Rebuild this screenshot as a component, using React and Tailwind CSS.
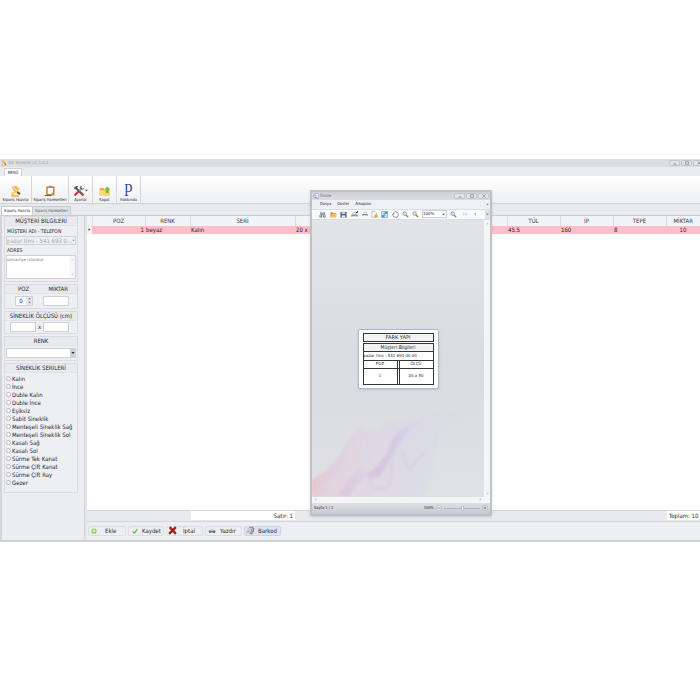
import React, { useState } from "react";

const series = [
  "Kalın",
  "İnce",
  "Duble Kalın",
  "Duble İnce",
  "Eşiksiz",
  "Sabit Sineklik",
  "Menteşeli Sineklik Sağ",
  "Menteşeli Sineklik Sol",
  "Kasalı Sağ",
  "Kasalı Sol",
  "Sürme Tek Kanat",
  "Sürme Çift Kanat",
  "Sürme Çift Ray",
  "Gezer",
];

function Svg({ className, children }) {
  return (
    <svg viewBox="0 0 16 16" fill="none" className={className} aria-hidden="true">
      {children}
    </svg>
  );
}

function OrderIcon({ className }) {
  return (
    <Svg className={className}>
      <path d="M3 3l5-2 5 4-4 4z" fill="#f3c04c" />
      <path d="M2 3l2-2 6 7-2 3z" fill="#f0913a" />
      <path d="M3 2l8 8" stroke="#fde6a4" strokeWidth="1.5" />
      <path d="M1 11l5-3 8 4-3 3H2z" fill="#f7cf6c" />
      <path d="M4 11l5-1 3 2-4 2z" fill="#fff3cf" />
      <path d="M10 8l4 3-1 2-4-2z" fill="#6a4a34" />
      <path d="M2 15h10" stroke="#d99a3a" />
    </Svg>
  );
}

function ClipboardIcon({ className }) {
  return (
    <Svg className={className}>
      <path d="M3 2h11v12H3z" fill="#c98732" />
      <path d="M5 4h7v6l-2 2H5z" fill="#fffdf6" />
      <path d="M12 10l-2 2v-2z" fill="#d8c39c" />
      <path d="M6 1h5v2H6z" fill="#8d96a3" />
      <path d="M1 14h9" stroke="#6b6660" strokeWidth="1.5" />
    </Svg>
  );
}

function ToolsIcon({ className }) {
  return (
    <Svg className={className}>
      <path d="M3 3l10 10" stroke="#50555d" strokeWidth="2.5" />
      <path d="M1 4l4-3 2 1-4 4z" fill="#50555d" />
      <path d="M12 4L7 9" stroke="#7d858e" strokeWidth="2" />
      <path d="M12 1l-1 3 2 1 2-2c0 3-2 4-4 3L9 4c0-2 1-3 3-3z" fill="#6c737c" />
      <path d="M8 8l-6 6" stroke="#d4392f" strokeWidth="3" />
      <path d="M11 11l3 3" stroke="#d4392f" strokeWidth="3" />
    </Svg>
  );
}

function FolderIcon({ className }) {
  return (
    <Svg className={className}>
      <path d="M1 4h5l1 2h7v8H1z" fill="#e8ab3c" />
      <path d="M1 7h14l-1 7H1z" fill="#fbd676" />
      <path d="M11 2l4 4h-2v5H9V6H7z" fill="#7bbd42" />
    </Svg>
  );
}

function OpenIcon({ className }) {
  return (
    <Svg className={className}>
      <path d="M1 3h5l2 2h6v9H1z" fill="#d9902e" />
      <path d="M4 7h12l-3 7H1z" fill="#f6bd5c" />
    </Svg>
  );
}

function BinocularsIcon({ className }) {
  return (
    <Svg className={className}>
      <path d="M4 2v4l-2 5v3h4V7h4v7h4v-3l-2-5V2" stroke="#65707f" strokeWidth="2" />
      <path d="M6 5h4" stroke="#65707f" strokeWidth="2" />
    </Svg>
  );
}

function SaveIcon({ className }) {
  return (
    <Svg className={className}>
      <path d="M1 2h14v13H1z" fill="#4b607f" />
      <path d="M4 2h8v5H4z" fill="#c3d2e6" />
      <path d="M4 10h8v5H4z" fill="#e9edf3" />
    </Svg>
  );
}

function PrinterIcon({ className, quick }) {
  return (
    <Svg className={className}>
      <path d="M4 7l2-4h7l-1 4" fill="#fff" stroke="#66788c" />
      <path d="M1 8h14v5H1z" fill="#72849a" />
      <path d="M3 11h10v3H3z" fill="#d9e5f1" />
      {quick && <path d="M11 5l4-4M15 1v3" stroke="#2c3f59" strokeWidth="2" />}
    </Svg>
  );
}

function PageSetupIcon({ className }) {
  return (
    <Svg className={className}>
      <path d="M2 1h7l3 3v10H2z" fill="#fff" stroke="#547fac" />
      <path d="M8 8h7v7H8z" fill="#e9a13d" />
    </Svg>
  );
}

function PreviewIcon({ className }) {
  return (
    <Svg className={className}>
      <path d="M5 1h9v13H4z" fill="#f4f8fd" stroke="#6d8cb4" />
      <circle cx="5" cy="9" r="3.5" fill="#d3e4f6" stroke="#4f729f" />
      <path d="M8 11l4 4" stroke="#4f729f" strokeWidth="2" />
    </Svg>
  );
}

function ScaleIcon({ className }) {
  return (
    <Svg className={className}>
      <path d="M1 1h14v14H1z" fill="#d7e6f4" stroke="#4c7fb3" />
      <path d="M8 1h7v6H8zM2 9h6v6H2z" fill="#5a93c5" />
      <path d="M4 4l8 8" stroke="#24507e" />
    </Svg>
  );
}

function HandIcon({ className }) {
  return (
    <Svg className={className}>
      <path
        d="M5 14l-4-6 2-1 1 1V4l2-2 2-1 2 1 2 1 2 3v4l-2 4z"
        fill="#fff"
        stroke="#5e6876"
        strokeWidth="1.6"
      />
    </Svg>
  );
}

function MagnifierIcon({ className }) {
  return (
    <Svg className={className}>
      <circle cx="6" cy="6" r="4" fill="#dcebf8" stroke="#66788c" strokeWidth="1.5" />
      <path d="M9 9l5 5" stroke="#b07838" strokeWidth="3" />
    </Svg>
  );
}

function AddIcon({ className }) {
  return (
    <Svg className={className}>
      <circle cx="8" cy="8" r="7" fill="#8bcb2c" />
      <path d="M8 4v8M4 8h8" stroke="#fff" strokeWidth="3" />
    </Svg>
  );
}

function CheckIcon({ className }) {
  return (
    <Svg className={className}>
      <path d="M2 9l4 5 8-11" stroke="#5cb52c" strokeWidth="3" />
    </Svg>
  );
}

function CancelIcon({ className }) {
  return (
    <Svg className={className}>
      <path d="M3 2l11 12M14 2L2 14" stroke="#ad1a17" strokeWidth="4" />
    </Svg>
  );
}

function PrintIcon({ className }) {
  return (
    <Svg className={className}>
      <path d="M1 8l4-2h7l3 2-1 4H3z" fill="#69717a" />
      <path d="M5 4h6l1 4H4z" fill="#c9ced4" />
      <path d="M5 10h5v2H5z" fill="#9ed05b" />
    </Svg>
  );
}

function BarcodeIcon({ className }) {
  return (
    <Svg className={className}>
      <path d="M5 2l6-1 4 3-1 6-4 5-4-1 3-6z" fill="#868c94" />
      <path d="M2 4l9-1-2 5-6 1z" fill="#c6cacf" />
      <path d="M1 11l5-1" stroke="#b88848" strokeWidth="2" />
      <path d="M10 4l2 3-3 5" stroke="#e8eaed" />
    </Svg>
  );
}

function WindowButtons({ className = "" }) {
  return (
    <div className={`flex items-center gap-px ${className}`}>
      <button aria-label="Simge durumuna küçült" className="flex h-[6px] w-[11px] items-center justify-center rounded-xs border border-[#c3c5cb] bg-[#e4e5e9]">
        <Svg className="size-1"><path d="M2 12h12" stroke="#85888f" strokeWidth="4" /></Svg>
      </button>
      <button aria-label="Ekranı kapla" className="flex h-[6px] w-[11px] items-center justify-center rounded-xs border border-[#c3c5cb] bg-[#e4e5e9]">
        <Svg className="size-1"><path d="M2 3h12v10H2z" stroke="#85888f" strokeWidth="3" /></Svg>
      </button>
      <button aria-label="Pencereyi kapat" className="flex h-[6px] w-[11px] items-center justify-center rounded-xs border border-[#c3c5cb] bg-[#e4e5e9]">
        <Svg className="size-1"><path d="M2 2l12 12M14 2L2 14" stroke="#85888f" strokeWidth="3" /></Svg>
      </button>
    </div>
  );
}

function RibbonButton({ label, className, children }) {
  return (
    <button className={`flex h-full flex-col items-center justify-end border-r border-[#d6d7dc] ${className}`}>
      <span className="flex h-3 items-center justify-center">{children}</span>
      <span className="text-[4px] leading-[6px] whitespace-nowrap">{label}</span>
    </button>
  );
}

function Panel({ title, children }) {
  return (
    <section className="border border-[#d9dbe0] bg-[#edeff2]">
      <h2 className="border-b border-[#dfe1e5] bg-[#e9eaee] text-center text-[6px] leading-[8px] whitespace-nowrap">{title}</h2>
      {children}
    </section>
  );
}

function ActionButton({ label, className, active, children }) {
  return (
    <button
      className={`flex h-[10px] items-center rounded-xs border px-px text-[6px] whitespace-nowrap ${
        active ? "border-[#cbd3ea] bg-[#dde4f6]" : "border-[#dcdde1] bg-[#eceef1]"
      } ${className}`}
    >
      {children}
      {label}
    </button>
  );
}

function Sidebar() {
  const [serie, setSerie] = useState("");
  const [poz, setPoz] = useState(0);

  return (
    <aside className="flex w-[85px] shrink-0 flex-col gap-[2px] border-r border-l-2 border-[#d3d5da] bg-[#ebedf0] pr-[6px] pl-[2px]">
      <Panel title="MÜŞTERİ BİLGİLERİ">
        <div className="flex flex-col px-px pb-[2px]">
          <label htmlFor="customer" className="pl-px text-[5px] leading-[10px] whitespace-nowrap">
            MÜŞTERİ ADI - TELEFON
          </label>
          <div className="relative">
            <select
              id="customer"
              className="block h-[9px] w-full appearance-none overflow-visible border border-[#d0d2d8] bg-[#eef0f2] text-[6px] leading-[7px] text-[#a3a6ac]"
            >
              <option>pazar timi - 541 693 0...</option>
            </select>
            <Svg className="pointer-events-none absolute top-[3px] right-px size-[3px]">
              <path d="M1 4h14l-7 8z" fill="#8d9097" />
            </Svg>
          </div>
          <label htmlFor="address" className="pl-px text-[5px] leading-[10px]">ADRES</label>
          <div className="flex h-6 border border-[#cfd1d7] bg-white">
            <textarea
              id="address"
              defaultValue="ümraniye istanbul"
              className="block min-w-0 flex-1 resize-none overflow-hidden font-['DejaVu_Sans',sans-serif] text-[4px] leading-[7px] text-[#777a80] outline-none"
            />
            <div className="flex w-[6px] flex-col items-center justify-between bg-[#f6f7f8] py-[2px]">
              <Svg className="size-[3px]"><path d="M1 12h14L8 4z" fill="#c5c7cc" /></Svg>
              <Svg className="size-[3px]"><path d="M1 4h14l-7 8z" fill="#c5c7cc" /></Svg>
            </div>
          </div>
        </div>
      </Panel>

      <section className="border border-[#d9dbe0] bg-[#edeff2]">
        <div className="flex justify-between border-b border-[#dfe1e5] bg-[#e9eaee] pr-[9px] pl-[13px] text-[6px] leading-[8px]">
          <label htmlFor="poz">POZ</label>
          <label htmlFor="count">MİKTAR</label>
        </div>
        <div className="flex justify-between py-[2px] pr-2 pl-[10px]">
          <div className="flex h-[10px] w-[18px] border border-[#cfd1d7] bg-white">
            <input
              id="poz"
              value={poz}
              onChange={(e) => setPoz(Number(e.target.value) || 0)}
              className="min-w-0 flex-1 text-center text-[6px] leading-[8px] outline-none"
            />
            <div className="flex w-[6px] flex-col bg-[#e6e7eb]">
              <button aria-label="Artır" onClick={() => setPoz(poz + 1)} className="flex h-1 items-center justify-center">
                <Svg className="size-[3px]"><path d="M1 12h14L8 4z" fill="#5f626a" /></Svg>
              </button>
              <button aria-label="Azalt" onClick={() => setPoz(Math.max(0, poz - 1))} className="flex h-1 items-center justify-center">
                <Svg className="size-[3px]"><path d="M1 4h14l-7 8z" fill="#5f626a" /></Svg>
              </button>
            </div>
          </div>
          <input id="count" className="h-[10px] w-[26px] border border-[#cfd1d7] bg-white text-[6px]" />
        </div>
      </section>

      <Panel title="SİNEKLİK ÖLÇÜSÜ (cm)">
        <div className="flex items-center justify-between py-px pr-2 pl-[5px] text-[6px] leading-[10px]">
          <input aria-label="En" className="h-[10px] w-[26px] border border-[#cfd1d7] bg-white" />
          x
          <input aria-label="Boy" className="h-[10px] w-[26px] border border-[#cfd1d7] bg-white" />
        </div>
      </Panel>

      <Panel title="RENK">
        <div className="relative px-px py-[2px]">
          <select aria-label="Renk" className="block h-[10px] w-full appearance-none border border-[#cfd1d7] bg-white text-[6px]" />
          <span className="pointer-events-none absolute top-[3px] right-[2px] flex h-2 w-[5px] items-center justify-center bg-[#cdd1de]">
            <Svg className="size-1"><path d="M1 4h14l-7 8z" fill="#2f3440" /></Svg>
          </span>
        </div>
      </Panel>

      <Panel title="SİNEKLİK SERİLERİ">
        <div className="pt-[2px] pb-[5px] pl-px">
          {series.map((name) => (
            <label key={name} className="flex items-center gap-px text-[6px] leading-[8px] whitespace-nowrap">
              <input
                type="radio"
                name="series"
                checked={serie === name}
                onChange={() => setSerie(name)}
                className="size-[5px] appearance-none rounded-full border border-[#b4b7be] bg-white checked:bg-[#4b5a7a]"
              />
              {name}
            </label>
          ))}
        </div>
      </Panel>
    </aside>
  );
}

function Orders() {
  return (
    <main className="flex min-w-0 flex-1 flex-col">
      <div className="flex-1 bg-white">
        <table className="w-full table-fixed border-collapse text-[6px] leading-[8px] text-[#1f2126]">
          <colgroup>
            <col className="w-[5px]" />
            <col className="w-[53px]" />
            <col className="w-[45px]" />
            <col className="w-[105px]" />
            <col />
            <col className="w-[53px]" />
            <col className="w-[53px]" />
            <col className="w-[53px]" />
            <col className="w-[34px]" />
          </colgroup>
          <thead>
            <tr className="h-[10px] bg-[#f3f4f6] text-[#383a42]">
              <th className="border-r border-[#d9dbe0]" />
              <th className="border-r border-[#d9dbe0] font-normal">POZ</th>
              <th className="border-r border-[#d9dbe0] font-normal">RENK</th>
              <th className="border-r border-[#d9dbe0] font-normal">SERİ</th>
              <th className="border-r border-[#d9dbe0] font-normal" />
              <th className="border-r border-[#d9dbe0] font-normal">TÜL</th>
              <th className="border-r border-[#d9dbe0] font-normal">İP</th>
              <th className="border-r border-[#d9dbe0] font-normal">TEPE</th>
              <th className="font-normal whitespace-nowrap">MİKTAR</th>
            </tr>
          </thead>
          <tbody>
            <tr className="h-2 bg-[#ffbec8]">
              <td className="bg-[#f3f4f6]">
                <Svg className="mx-auto size-[3px]"><path d="M3 1l10 7-10 7z" fill="#33353b" /></Svg>
              </td>
              <td className="pr-px text-right">1</td>
              <td className="pl-px">beyaz</td>
              <td className="pl-px">Kalın</td>
              <td className="pl-px">20 x 50</td>
              <td className="pl-px">45.5</td>
              <td className="pl-px">160</td>
              <td className="pl-px">8</td>
              <td className="text-center">10</td>
            </tr>
          </tbody>
        </table>
      </div>

      <div className="flex h-3 items-center justify-between border-y border-[#d3d5da] bg-[#e8eaed] text-[6px] leading-[9px]">
        <div className="ml-[104px] w-[104px] bg-white pr-[2px] text-right">Satır: 1</div>
        <div className="w-[33px] bg-white pl-[2px] whitespace-nowrap">Toplam: 10</div>
      </div>

      <div className="flex items-center gap-[2px] bg-[#eceef1] px-px pt-1 pb-1">
        <ActionButton label="Ekle" className="w-[38px] gap-2 pl-[2px]"><AddIcon className="size-[6px]" /></ActionButton>
        <ActionButton label="Kaydet" className="w-[36px] gap-1 pl-[3px]"><CheckIcon className="size-[6px]" /></ActionButton>
        <ActionButton label="İptal" className="w-[37px] gap-[6px]"><CancelIcon className="size-[9px]" /></ActionButton>
        <ActionButton label="Yazdır" className="w-[37px] gap-1 pl-[2px]"><PrintIcon className="size-2" /></ActionButton>
        <ActionButton label="Barkod" active className="w-[37px] gap-[3px]"><BarcodeIcon className="size-[9px]" /></ActionButton>
      </div>
    </main>
  );
}

function Smoke() {
  return (
    <svg viewBox="0 0 170 92" className="h-[92px] w-full" preserveAspectRatio="none" aria-hidden="true">
      <defs>
        <linearGradient id="haze" x1="0" y1="0" x2="1" y2="0">
          <stop offset="0" stopColor="#eeb4c0" stopOpacity="0.4" />
          <stop offset="0.3" stopColor="#e2c4e0" stopOpacity="0.3" />
          <stop offset="0.6" stopColor="#d6cdea" stopOpacity="0.25" />
          <stop offset="1" stopColor="#d9dbe6" stopOpacity="0" />
        </linearGradient>
        <linearGradient id="fold" x1="0" y1="1" x2="1" y2="0">
          <stop offset="0" stopColor="#d9b0dd" stopOpacity="0.5" />
          <stop offset="0.5" stopColor="#c8b9e6" stopOpacity="0.45" />
          <stop offset="1" stopColor="#d2cdea" stopOpacity="0" />
        </linearGradient>
        <filter id="soft">
          <feGaussianBlur stdDeviation="1" />
        </filter>
      </defs>
      <g filter="url(#soft)">
        <path
          d="M0 74C12 68 22 60 30 46C38 32 44 24 49 23C56 28 62 28 72 20C94 8 130 12 168 2C146 12 130 22 124 38C118 56 122 76 112 92H0z"
          fill="url(#haze)"
        />
        <path d="M0 76C14 68 26 52 34 38C40 30 46 22 50 23C46 34 40 48 30 60C20 72 12 82 0 88z" fill="url(#haze)" />
        <path d="M0 92C10 78 18 72 22 62C24 68 18 82 8 92z" fill="url(#haze)" />
        <path d="M54 70C64 62 74 52 78 36C84 24 98 16 120 10C102 20 94 28 88 36C80 46 78 58 66 72C60 72 56 74 54 70z" fill="url(#fold)" />
        <path d="M26 90C34 80 42 66 52 56C54 62 50 66 60 62C56 70 48 76 44 80C40 84 36 88 38 92z" fill="url(#fold)" opacity="0.7" />
        <path d="M88 44C94 50 96 54 95 66C98 56 112 44 122 36C112 50 100 60 96 68C90 60 90 54 88 44z" fill="url(#fold)" opacity="0.5" />
        <path d="M56 72C58 84 68 88 76 80C80 74 76 64 80 56" fill="none" stroke="#cbb7e0" strokeOpacity="0.3" strokeWidth="2" />
      </g>
    </svg>
  );
}

function ToolButton({ label, className = "", children }) {
  return (
    <button aria-label={label} className={`flex size-[7px] shrink-0 items-center justify-center ${className}`}>
      {children}
    </button>
  );
}

function Preview() {
  const [zoom, setZoom] = useState(50);

  return (
    <div role="dialog" aria-label="Önizle" className="absolute top-[31px] left-[310px] flex h-[326px] w-[182px] flex-col border-2 border-[#bfc1c9] bg-[#e4e5e9] shadow-sm">
      <div className="flex h-2 items-center bg-linear-to-b from-[#cfd1d8] to-[#dcdde2] px-px text-[4px] text-[#5c5f68]">
        <PreviewIcon className="mr-px size-[6px]" />
        Önizle
        <WindowButtons className="ml-auto" />
      </div>
      <nav className="flex h-[9px] shrink-0 items-center gap-[6px] bg-[#eff0f3] pr-px pl-2 text-[4px]">
        <button>Dosya</button>
        <button>Göster</button>
        <button>Arkaplan</button>
        <Svg className="ml-auto size-[3px]"><path d="M1 4h14l-7 8z" fill="#777a82" /></Svg>
      </nav>
      <div className="flex h-[11px] shrink-0 items-center gap-[3px] border-y border-[#dcdde2] bg-[#f9fafb] pl-[7px]">
        <ToolButton label="Bul"><BinocularsIcon className="size-[7px]" /></ToolButton>
        <ToolButton label="Aç" className="ml-px"><OpenIcon className="size-[7px]" /></ToolButton>
        <ToolButton label="Kaydet"><SaveIcon className="size-[7px]" /></ToolButton>
        <ToolButton label="Yazdır" className="ml-px"><PrinterIcon quick className="size-[7px]" /></ToolButton>
        <ToolButton label="Hızlı yazdır"><PrinterIcon className="size-[6px]" /></ToolButton>
        <ToolButton label="Sayfa yapısı"><PageSetupIcon className="size-[7px]" /></ToolButton>
        <ToolButton label="Ölçek"><ScaleIcon className="size-[7px]" /></ToolButton>
        <ToolButton label="El aracı" className="ml-px"><HandIcon className="size-[7px]" /></ToolButton>
        <ToolButton label="Büyüteç"><MagnifierIcon className="size-[7px]" /></ToolButton>
        <ToolButton label="Uzaklaştır"><MagnifierIcon className="size-[7px]" /></ToolButton>
        <div className="relative">
          <select aria-label="Yakınlık" className="block h-2 w-[25px] appearance-none border border-[#cfd1d7] bg-white font-['DejaVu_Sans',sans-serif] text-[4px] leading-[6px]">
            <option>100%</option>
          </select>
          <Svg className="pointer-events-none absolute top-[3px] right-[2px] size-[3px]"><path d="M1 4h14l-7 8z" fill="#44474f" /></Svg>
        </div>
        <ToolButton label="Yakınlaştır"><MagnifierIcon className="size-[7px]" /></ToolButton>
        <ToolButton label="İlk sayfa" className="ml-px">
          <Svg className="size-1"><path d="M2 2v12M14 2L6 8l8 6z" stroke="#b4b7be" strokeWidth="2" /></Svg>
        </ToolButton>
        <ToolButton label="Önceki sayfa">
          <Svg className="size-1"><path d="M12 2L4 8l8 6z" fill="#b4b7be" /></Svg>
        </ToolButton>
        <button aria-label="Diğer" className="ml-auto flex h-full w-[5px] items-center justify-center bg-[#dfe0e6]">
          <Svg className="size-[3px]"><path d="M1 4h14l-7 8z" fill="#777a82" /></Svg>
        </button>
      </div>

      <div className="flex min-h-0 flex-1">
        <div className="flex min-w-0 flex-1 flex-col items-center justify-between bg-linear-to-b from-[#e2e4e8] via-[#dadce0] to-[#dfe1e5] pt-[109px]">
          <div className="w-[81px] rounded-xs border border-[#a9b7d2] bg-white px-1 py-[3px] shadow-sm">
            <h3 className="border border-[#34363a] bg-[#f3f3f3] text-center font-['DejaVu_Sans',sans-serif] text-[5px] leading-[7px]">FARK YAPI</h3>
            <h4 className="mt-px border border-[#34363a] bg-[#f3f3f3] text-center text-[5px] leading-[7px]">Müşteri Bilgileri</h4>
            <p className="border-x border-[#34363a] font-['DejaVu_Sans',sans-serif] text-[4px] leading-[8px] whitespace-nowrap">pazar timi - 541 693 00 00</p>
            <table className="w-full table-fixed border-collapse border border-[#34363a] text-center font-['DejaVu_Sans',sans-serif] text-[4px] leading-[6px]">
              <thead>
                <tr className="h-2">
                  <th className="border-b border-[#34363a] font-normal">POZ</th>
                  <th className="w-[2px] border border-[#34363a]" />
                  <th className="border-b border-[#34363a] font-normal">ÖLÇÜ</th>
                </tr>
              </thead>
              <tbody>
                <tr className="h-4">
                  <td>1</td>
                  <td className="border-x border-[#34363a]" />
                  <td>20 x 50</td>
                </tr>
              </tbody>
            </table>
          </div>
          <Smoke />
        </div>
        <div className="flex w-[6px] flex-col items-center justify-between bg-[#f4f5f7] py-[2px]">
          <Svg className="size-[3px]"><path d="M1 12h14L8 4z" fill="#b5b7bd" /></Svg>
          <Svg className="size-[3px]"><path d="M1 4h14l-7 8z" fill="#b5b7bd" /></Svg>
        </div>
      </div>
      <div className="flex h-[6px] shrink-0 items-center justify-between bg-[#f4f5f7] pr-2 pl-[2px]">
        <Svg className="size-[3px]"><path d="M12 1v14L4 8z" fill="#b5b7bd" /></Svg>
        <Svg className="size-[3px]"><path d="M4 1v14l8-7z" fill="#b5b7bd" /></Svg>
      </div>

      <div className="flex h-[11px] shrink-0 items-center bg-linear-to-b from-[#dfe0e5] to-[#c9cbd2] px-[2px] text-[4px]">
        Sayfa 1 / 1
        <span className="ml-auto">100%</span>
        <button aria-label="Küçült" className="ml-[2px]">
          <Svg className="size-[6px]"><circle cx="8" cy="8" r="7" fill="#f2f3f6" stroke="#85888f" /><path d="M4 8h8" stroke="#62656e" strokeWidth="2" /></Svg>
        </button>
        <input
          type="range"
          aria-label="Yakınlık oranı"
          value={zoom}
          onChange={(e) => setZoom(e.target.value)}
          className="mx-[2px] h-1 w-9 appearance-none bg-transparent [&::-webkit-slider-runnable-track]:h-px [&::-webkit-slider-runnable-track]:bg-[#b4b5cc] [&::-webkit-slider-thumb]:-mt-[2px] [&::-webkit-slider-thumb]:h-[5px] [&::-webkit-slider-thumb]:w-[3px] [&::-webkit-slider-thumb]:appearance-none [&::-webkit-slider-thumb]:border [&::-webkit-slider-thumb]:border-[#b4c3e0] [&::-webkit-slider-thumb]:bg-[#eef3fc]"
        />
        <button aria-label="Büyüt">
          <Svg className="size-[6px]"><circle cx="8" cy="8" r="7" fill="#f2f3f6" stroke="#85888f" /><path d="M4 8h8M8 4v8" stroke="#62656e" strokeWidth="2" /></Svg>
        </button>
      </div>
    </div>
  );
}

export default function App() {
  return (
    <div className="flex min-h-screen flex-col justify-center bg-white font-['DejaVu_Sans_Condensed','DejaVu_Sans',sans-serif] text-[#25272d]">
      <div className="relative flex flex-col overflow-hidden border-b-2 border-[#cfd1d7] bg-[#e8eaed]">
        <header className="flex h-2 items-center bg-[#dcdde2] pl-px font-['DejaVu_Sans',sans-serif] text-[4px] text-[#9b9da4]">
          <OrderIcon className="mr-px size-[6px]" />
          Alk Sineklik v1.1.0.1
          <WindowButtons className="-mr-1 ml-auto" />
        </header>

        <div className="flex h-[9px] items-end bg-[#ebecef]">
          <button className="ml-1 h-2 w-[18px] border border-b-0 border-[#d0d2d8] bg-white text-[4px] leading-[7px]">MENÜ</button>
        </div>

        <div className="flex h-7 shrink-0 border-b border-[#d0d2d8] bg-linear-to-b from-white to-[#eff0f3]">
          <RibbonButton label="Sipariş Hazırla" className="w-8"><OrderIcon className="size-3" /></RibbonButton>
          <RibbonButton label="Sipariş Hareketleri" className="w-[37px]"><ClipboardIcon className="size-3" /></RibbonButton>
          <RibbonButton label="Ayarlar" className="w-6">
            <ToolsIcon className="size-3" />
            <Svg className="size-[3px]"><path d="M1 4h14l-7 8z" fill="#33353b" /></Svg>
          </RibbonButton>
          <RibbonButton label="Kapat" className="w-6"><FolderIcon className="size-3" /></RibbonButton>
          <RibbonButton label="Hakkında" className="w-6">
            <span className="pb-2 font-['Liberation_Serif',serif] text-[16px] leading-[12px] text-[#2f4c8c]">p</span>
          </RibbonButton>
        </div>

        <div className="flex h-3 shrink-0 items-end border-b border-[#c9cbd2] pl-px text-[4px] leading-[8px]">
          <button className="w-8 border border-b-0 border-[#c9cbd2] bg-white whitespace-nowrap">Sipariş Hazırla</button>
          <button className="w-[38px] border border-b-0 border-l-0 border-[#c9cbd2] bg-[#e0e2e6] whitespace-nowrap text-[#55585f]">Sipariş Hareketleri</button>
        </div>

        <div className="flex h-[324px]">
          <Sidebar />
          <div className="flex w-[2px] shrink-0 items-center bg-[#e4e6ea]" />
          <Orders />
        </div>

        <Preview />
      </div>
    </div>
  );
}
